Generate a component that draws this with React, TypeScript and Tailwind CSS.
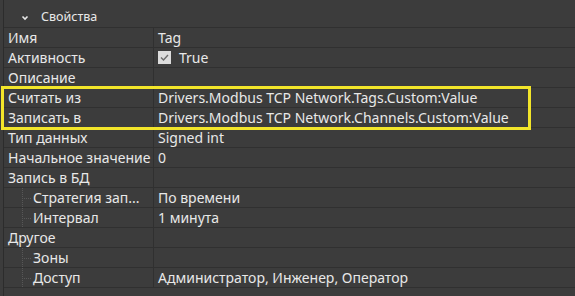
import React from "react";

type Row = { label: string; value?: string; indent?: boolean; check?: boolean };

const rows: Row[] = [
  { label: "Имя", value: "Tag" },
  { label: "Активность", value: "True", check: true },
  { label: "Описание" },
  { label: "Считать из", value: "Drivers.Modbus TCP Network.Tags.Custom:Value" },
  { label: "Записать в", value: "Drivers.Modbus TCP Network.Channels.Custom:Value" },
  { label: "Тип данных", value: "Signed int" },
  { label: "Начальное значение", value: "0" },
  { label: "Запись в БД" },
  { label: "Стратегия зап...", value: "По времени", indent: true },
  { label: "Интервал", value: "1 минута", indent: true },
  { label: "Другое" },
  { label: "Зоны", indent: true },
  { label: "Доступ", value: "Администратор, Инженер, Оператор", indent: true },
];

function TreeLine() {
  return (
    <div className="relative w-[25px] h-full shrink-0">
      <div className="absolute left-[14px] top-0 bottom-0 border-l border-dotted border-[#575757]" />
      <div className="absolute left-[14px] right-[2px] top-1/2 border-t border-dotted border-[#575757]" />
    </div>
  );
}

export default function App() {
  return (
    <div
      className="w-[575px] h-[296px] bg-[#3c3c3c] text-[#e8e8e8] overflow-hidden text-[14px] leading-none"
      style={{ fontFamily: '"Noto Sans", "Open Sans", sans-serif' }}
    >
      <div className="ml-[3px] h-full border-l border-[#2c2c2c] relative pt-[8px]">
        <div className="h-[20px] flex items-center border-b border-[#303030]">
          <svg width="10" height="10" viewBox="0 0 10 10" className="ml-[16px] mr-[11px]">
            <path d="M2.5 3.5 L5 6 L7.5 3.5" stroke="#e8e8e8" strokeWidth="1.6" fill="none" />
          </svg>
          <span className="text-[12.5px]">Свойства</span>
        </div>
        {rows.map((r, i) => (
          <div key={i} className="h-[20px] grid grid-cols-[150px_1fr] border-b border-[#303030]">
            <div className="flex items-center border-r border-[#303030] pl-[4px] h-full">
              {r.indent && <TreeLine />}
              <span className="whitespace-nowrap">{r.label}</span>
            </div>
            <div className="flex items-center pl-[4px] gap-[8px]">
              {r.check && (
                <span className="w-[13px] h-[13px] bg-[#dcdcdc] flex items-center justify-center">
                  <svg width="11" height="11" viewBox="0 0 11 11">
                    <path d="M2 5.5 L4.5 8 L9 3" stroke="#6a6a6a" strokeWidth="1.4" fill="none" />
                  </svg>
                </span>
              )}
              {r.value && <span className="whitespace-nowrap">{r.value}</span>}
            </div>
          </div>
        ))}
        <div className="absolute left-[-3px] top-[86px] w-[530px] h-[44px] border-[3px] border-[#f2e52a] pointer-events-none" />
      </div>
    </div>
  );
}
